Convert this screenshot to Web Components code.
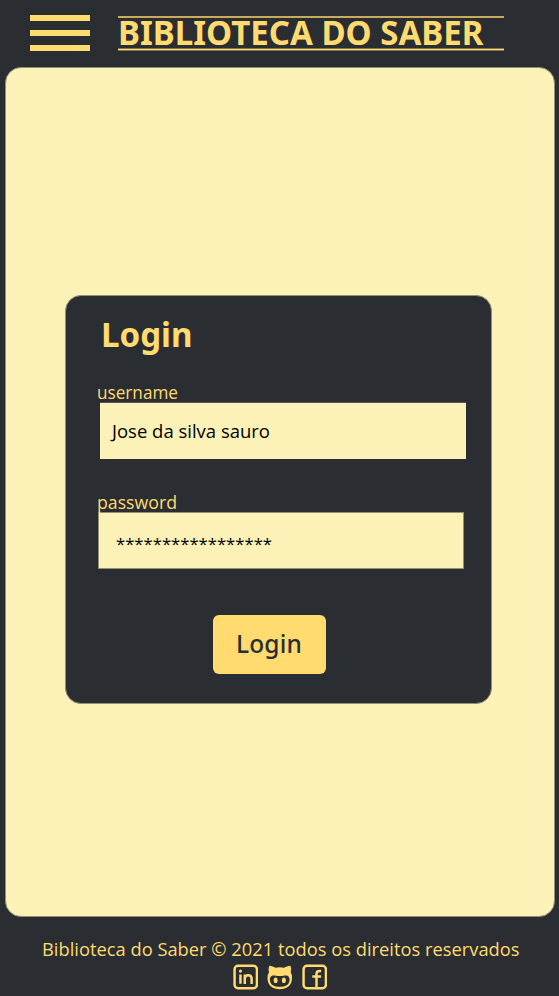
<!DOCTYPE html>
<html lang="pt-BR"><head><meta charset="utf-8"><title>Biblioteca do Saber</title>
<style>
html,body{margin:0;height:100%;background:#2a2d32}
body{font-family:"Noto Sans","Open Sans",sans-serif;--gold:#ffdb70;--cream:#fcf2b8;--ink:#2a2d32;color:#ffdb70}
</style></head><body><library-page></library-page>
<script>
const define=(name,html,ready)=>customElements.define(name,class extends HTMLElement{
 connectedCallback(){
  if(this.shadowRoot)return;
  const t=document.createElement('template');t.innerHTML=html;
  this.attachShadow({mode:'open'}).append(t.content.cloneNode(true));
  if(ready)ready(this);
 }
});
// One line of text that fills the width in its attribute: tracked out, or condensed when too wide.
define('fit-text',`<style>:host{display:block;white-space:pre}span{display:inline-block;transform-origin:0 50%}</style><span><slot></slot></span>`,el=>{
 const s=el.shadowRoot.querySelector('span');
 const text=el.shadowRoot.querySelector('slot').assignedNodes({flatten:true}).map(n=>n.textContent).join('');
 const want=+el.getAttribute('width'),have=s.getBoundingClientRect().width;
 if(have>want)s.style.transform=`scaleX(${want/have})`;
 else s.style.letterSpacing=(want-have)/text.length+'px';
});
define('menu-button',`<style>:host{display:flex;flex-direction:column;gap:9px;width:60px}i{height:6px;background:var(--gold)}</style><i></i><i></i><i></i>`);
define('page-title',`<style>:host{display:block;box-sizing:border-box;width:385.5px;height:35px;border-top:2px solid #c9ab5c;font:700 34.5px/30px "Noto Sans",sans-serif}
.text{height:30px;display:flow-root}fit-text{margin-top:-1px;height:31px}.line{height:1px;border:solid #85754e;border-width:1px 0;background:var(--gold)}</style><div class="text"><fit-text width="365.5"><slot></slot></fit-text></div><div class="line"></div>`);
define('app-header',`<style>:host{display:flex;align-items:flex-start;height:67px;box-sizing:border-box;padding:15px 0 0 29.5px;gap:28.6px}page-title{margin-top:1px}</style><menu-button></menu-button><page-title>BIBLIOTECA DO SABER</page-title>`);
define('text-field',`<style>:host{display:block;width:366px}
.label{font:400 18.5px/18px "Open Sans","Noto Sans",sans-serif;height:19px}
.box{box-sizing:border-box;height:57px;border-top:1px solid #56554e;background:var(--cream);color:#000;font:400 18.5px/55px "Open Sans","Noto Sans",sans-serif;padding-left:var(--inset,12px)}
:host([outlined]) .box{border:1px solid #938f75}
:host([outlined]) .label{margin-left:-1.5px}
</style><div class="label"><slot name="label"></slot></div><div class="box"><slot></slot></div>`);
define('login-button',`<style>:host{display:block;box-sizing:border-box;padding-left:23.5px;width:113px;height:59px;border-radius:6px;background:var(--gold);color:var(--ink);font:500 24.5px/57px "Noto Sans",sans-serif}</style><fit-text width="66"><slot></slot></fit-text>`);
define('login-card',`<style>:host{display:flex;flex-direction:column;box-sizing:border-box;width:427px;height:409px;border:1px solid #938f75;border-radius:16px;background:var(--ink)}
h1{margin:18px 0 0 34.5px;font:700 34px/40px "Noto Sans",sans-serif;height:69px}
.user{margin-left:34px}.user fit-text[slot=label]{margin-left:-3px}
.pass{margin:34px 0 0 32px;--inset:17px}.pass .stars{padding-top:3px;font-size:17px}
login-button{margin:46px 0 0 146.5px}
</style><h1><fit-text width="91.5">Login</fit-text></h1>
<text-field class="user"><fit-text slot="label" width="81">username</fit-text><fit-text width="158">Jose da silva sauro</fit-text></text-field>
<text-field class="pass" outlined><fit-text slot="label" width="80">password</fit-text><fit-text class="stars" width="156">*****************</fit-text></text-field>
<login-button>Login</login-button>`);
define('main-panel',`<style>:host{display:block;box-sizing:border-box;margin-left:5px;width:550px;height:850px;border:1px solid #938f75;border-radius:16px;background:var(--cream);padding:227px 0 0 59px}</style><slot></slot>`);
define('social-links',`<style>:host{display:flex;gap:9px;justify-content:center;padding-left:1px}svg{display:block;width:25.5px;height:26px;fill:none;stroke:var(--gold);stroke-width:2.5}</style>
<svg viewBox="0 0 26 26"><rect x="1.6" y="1.6" width="22.8" height="22.8" rx="3.5"/><path d="M7.6 10.5v9.5M12 20.2v-9.7M12 15c0-5 7-5 7 0v5.2"/><circle cx="7.6" cy="7" r="1.6" fill="#ffdb70" stroke="none"/></svg>
<svg viewBox="0 0 26 26"><path fill="#ffdb70" stroke="none" d="M2.2 1.5C4.5 1.5 7 2.7 8.5 3.6Q13 2.7 17.5 3.6C19 2.7 21.5 1.5 24 1.5Q25.2 5 24.2 8.5Q25.8 10.5 25.5 14C25.5 22 20 25.5 13 25.5S.5 22 .5 14Q.4 10.5 2 8.5Q1 5 2.2 1.5Z"/><path fill="#2a2d32" stroke="none" d="M8 11.5Q13 12.6 18 11.5C22 10.8 23.2 13.5 23 16C22.7 21.2 18.5 23 13 23S3.3 21.2 3 16C2.8 13.5 4 10.8 8 11.5Z"/><ellipse cx="8.8" cy="16.3" rx="2" ry="2.9" fill="#ffdb70" stroke="none"/><ellipse cx="17.2" cy="16.3" rx="2" ry="2.9" fill="#ffdb70" stroke="none"/></svg>
<svg viewBox="0 0 26 26"><rect x="1.6" y="1.6" width="22.8" height="22.8" rx="3.5"/><path d="M19.5 6.8H18q-3.2 0-3.2 3V24M10.5 12.5h9"/></svg>`);
define('app-footer',`<style>:host{display:block;height:79px;box-sizing:border-box;padding-top:18px;font:400 18.8px/28px "Open Sans","Noto Sans",sans-serif}fit-text{margin-left:42.3px;height:28px}social-links{margin-top:1px}</style><fit-text width="477.5">Biblioteca do Saber © 2021 todos os direitos reservados</fit-text><social-links></social-links>`);
define('library-page',`<style>:host{display:block;width:559px;height:996px;overflow:hidden}</style><app-header></app-header><main-panel><login-card></login-card></main-panel><app-footer></app-footer>`);
</script></body></html>
